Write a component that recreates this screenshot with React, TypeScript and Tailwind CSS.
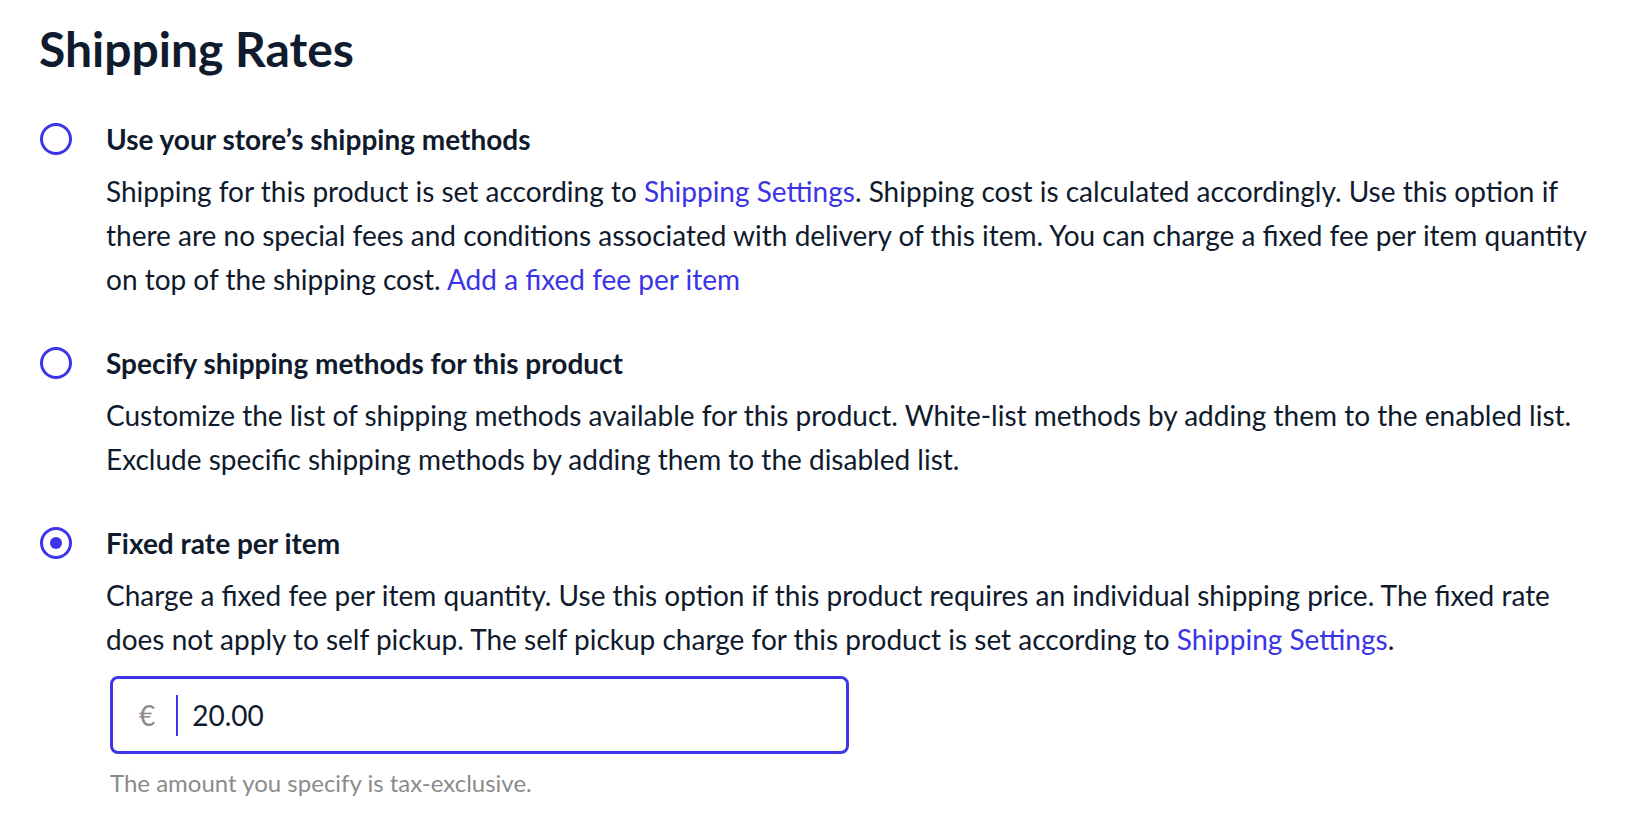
import { useState } from 'react';

interface OptionProps {
  title: string;
  checked: boolean;
  onSelect: () => void;
  children: React.ReactNode;
}

function Radio({ checked }: { checked: boolean }) {
  return (
    <span className="flex h-[32px] w-[32px] items-center justify-center rounded-full border-[3.5px] border-[#3d35e8]">
      {checked && <span className="h-[12px] w-[12px] rounded-full bg-[#3d35e8]" />}
    </span>
  );
}

function ShippingOption({ title, checked, onSelect, children }: OptionProps) {
  return (
    <div className="flex gap-[34px]">
      <button onClick={onSelect} className="flex h-[44px] shrink-0 items-center">
        <Radio checked={checked} />
      </button>
      <div className="flex-1">
        <div className="text-[28px] font-bold leading-[44px] text-[#0f1b2d]">{title}</div>
        <div className="mt-[8px] text-[28px] leading-[44px] text-[#0f1b2d]">{children}</div>
      </div>
    </div>
  );
}

const link = 'text-[#3b34e6]';

export default function App() {
  const [mode, setMode] = useState<'store' | 'custom' | 'fixed'>('fixed');
  const [price, setPrice] = useState('20.00');

  return (
    <div
      className="min-h-screen bg-white pt-[20px] pl-[39px] pr-[40px]"
      style={{ fontFamily: 'Lato, "Noto Sans", sans-serif' }}
    >
      <h1 className="text-[48px] font-bold leading-[58px] text-[#101b2d]">Shipping Rates</h1>

      <div className="mt-[39px] flex flex-col gap-[40px] pl-[1px]">
        <ShippingOption
          title="Use your store’s shipping methods"
          checked={mode === 'store'}
          onSelect={() => setMode('store')}
        >
          Shipping for this product is set according to <span className={link}>Shipping Settings</span>.
          Shipping cost is calculated accordingly. Use this option if there are no special fees and
          conditions associated with delivery of this item. You can charge a fixed fee per item quantity
          on top of the shipping cost. <span className={link}>Add a fixed fee per item</span>
        </ShippingOption>

        <ShippingOption
          title="Specify shipping methods for this product"
          checked={mode === 'custom'}
          onSelect={() => setMode('custom')}
        >
          Customize the list of shipping methods available for this product. White-list methods by adding
          them to the enabled list. Exclude specific shipping methods by adding them to the disabled list.
        </ShippingOption>

        <ShippingOption
          title="Fixed rate per item"
          checked={mode === 'fixed'}
          onSelect={() => setMode('fixed')}
        >
          Charge a fixed fee per item quantity. Use this option if this product requires an individual
          shipping price. The fixed rate does not apply to self pickup. The self pickup charge for this
          product is set according to <span className={link}>Shipping Settings</span>.
          <div className="mt-[15px] ml-[4px] flex h-[78px] w-[739px] items-center rounded-[8px] border-[3.5px] border-[#3d35e8]">
            <span className="pl-[26px] pr-[21px] text-[28px] text-[#8c8c8c]">€</span>
            <span className="h-[41px] w-[2px] bg-[#3d35e8]" />
            <input
              value={price}
              onChange={(e) => setPrice(e.target.value)}
              className="ml-[14px] flex-1 bg-transparent text-[28px] text-[#0f1b2d] outline-none"
            />
          </div>
          <div className="mt-[15px] ml-[4px] text-[24px] leading-[28px] text-[#8b8b8b]">
            The amount you specify is tax-exclusive.
          </div>
        </ShippingOption>
      </div>
    </div>
  );
}
